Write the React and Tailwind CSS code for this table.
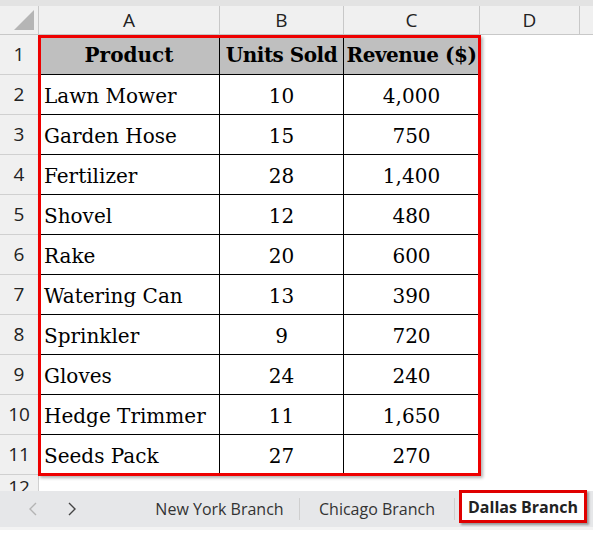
import React from 'react';

const rows = [
  ['Lawn Mower', '10', '4,000'],
  ['Garden Hose', '15', '750'],
  ['Fertilizer', '28', '1,400'],
  ['Shovel', '12', '480'],
  ['Rake', '20', '600'],
  ['Watering Can', '13', '390'],
  ['Sprinkler', '9', '720'],
  ['Gloves', '24', '240'],
  ['Hedge Trimmer', '11', '1,650'],
  ['Seeds Pack', '27', '270'],
];

const ui = { fontFamily: '"Open Sans", "Noto Sans", sans-serif' };
const serif = { fontFamily: '"DejaVu Serif", "Liberation Serif", serif' };

const RowNum = ({ n, h = 'h-10' }) => (
  <div className={`w-[39px] ${h} shrink-0 bg-[#f0f0f0] border-r border-b border-[#d0d0d0] flex items-center justify-center text-[19px] text-[#222]`} style={ui}>
    {n}
  </div>
);

const App = () => {
  return (
    <div className="w-[593px] h-[533px] bg-white overflow-hidden relative">
      {/* top strip */}
      <div className="h-[6px] bg-[#e3e3e3]" />

      {/* column headers */}
      <div className="flex h-[29px] bg-[#f0f0f0] border-b border-[#c8c8c8] text-[19px] text-[#222]" style={ui}>
        <div className="w-[39px] shrink-0 border-r border-[#c8c8c8] flex items-end justify-end p-[4px]">
          <div className="w-0 h-0 border-l-[20px] border-l-transparent border-b-[20px] border-b-[#b5b5b5]" />
        </div>
        <div className="w-[181px] shrink-0 border-r border-[#c8c8c8] flex items-center justify-center">A</div>
        <div className="w-[124px] shrink-0 border-r border-[#c8c8c8] flex items-center justify-center">B</div>
        <div className="w-[136px] shrink-0 border-r border-[#c8c8c8] flex items-center justify-center">C</div>
        <div className="w-[100px] shrink-0 border-r border-[#c8c8c8] flex items-center justify-center">D</div>
        <div className="flex-1" />
      </div>

      {/* header row */}
      <div className="flex">
        <RowNum n={1} />
        <div className="flex h-10 bg-[#bfbfbf] border-b border-black text-[20px] font-bold text-black" style={serif}>
          <div className="w-[181px] border-r border-black flex items-center justify-center">Product</div>
          <div className="w-[124px] border-r border-black flex items-center justify-center whitespace-nowrap tracking-[-0.5px]">Units Sold</div>
          <div className="w-[136px] border-r border-black flex items-center justify-center whitespace-nowrap tracking-[-0.5px]">Revenue ($)</div>
        </div>
      </div>

      {rows.map((r, i) => (
        <div key={i} className="flex">
          <RowNum n={i + 2} />
          <div className="flex h-10 border-b border-black text-[20px] text-black" style={serif}>
            <div className="w-[181px] border-r border-black flex items-center pl-[5px] pt-[2px] whitespace-nowrap">{r[0]}</div>
            <div className="w-[124px] border-r border-black flex items-center justify-center pt-[2px]">{r[1]}</div>
            <div className="w-[136px] border-r border-black flex items-center justify-center pt-[2px]">{r[2]}</div>
          </div>
        </div>
      ))}

      {/* row 12 partial */}
      <div className="flex h-[16px] overflow-hidden">
        <div className="w-[39px] shrink-0 bg-[#f0f0f0] border-r border-[#d0d0d0] flex justify-center pt-[3px] text-[19px] leading-none text-[#222]" style={ui}>12</div>
      </div>

      {/* sheet tabs */}
      <div className="flex items-stretch h-[39px] bg-[#e6e7e9] border-b-[3px] border-[#f3f3f3] text-[16px] text-[#333]" style={ui}>
        <div className="w-[140px] shrink-0 flex items-center pl-[27px] gap-[27px]">
          <svg width="12" height="16" viewBox="0 0 12 16" fill="none" stroke="#b4b4b4" strokeWidth="1.4"><path d="M9 2 L3 8 L9 14" /></svg>
          <svg width="12" height="16" viewBox="0 0 12 16" fill="none" stroke="#444" strokeWidth="1.4"><path d="M3 2 L9 8 L3 14" /></svg>
        </div>
        <div className="w-[160px] shrink-0 flex items-center justify-center border-r border-[#cfcfcf] my-[7px] whitespace-nowrap">New York Branch</div>
        <div className="w-[155px] shrink-0 flex items-center justify-center border-r border-[#cfcfcf] my-[7px] whitespace-nowrap">Chicago Branch</div>
        <div className="flex items-start pl-[4px] shrink-0">
          <div className="h-[33px] w-[128px] bg-white flex items-center justify-center whitespace-nowrap font-bold text-[#222] border-[3px] border-[#e00000] shadow-[2px_2px_2px_rgba(0,0,0,0.35)] -mt-[1px]">
            Dallas Branch
          </div>
        </div>
      </div>

      {/* red selection outline */}
      <div className="absolute left-[38px] top-[35px] w-[443px] h-[441px] border-[3px] border-[#ee0000] shadow-[2px_2px_3px_rgba(0,0,0,0.3)] pointer-events-none" />
    </div>
  );
};

export default App;
